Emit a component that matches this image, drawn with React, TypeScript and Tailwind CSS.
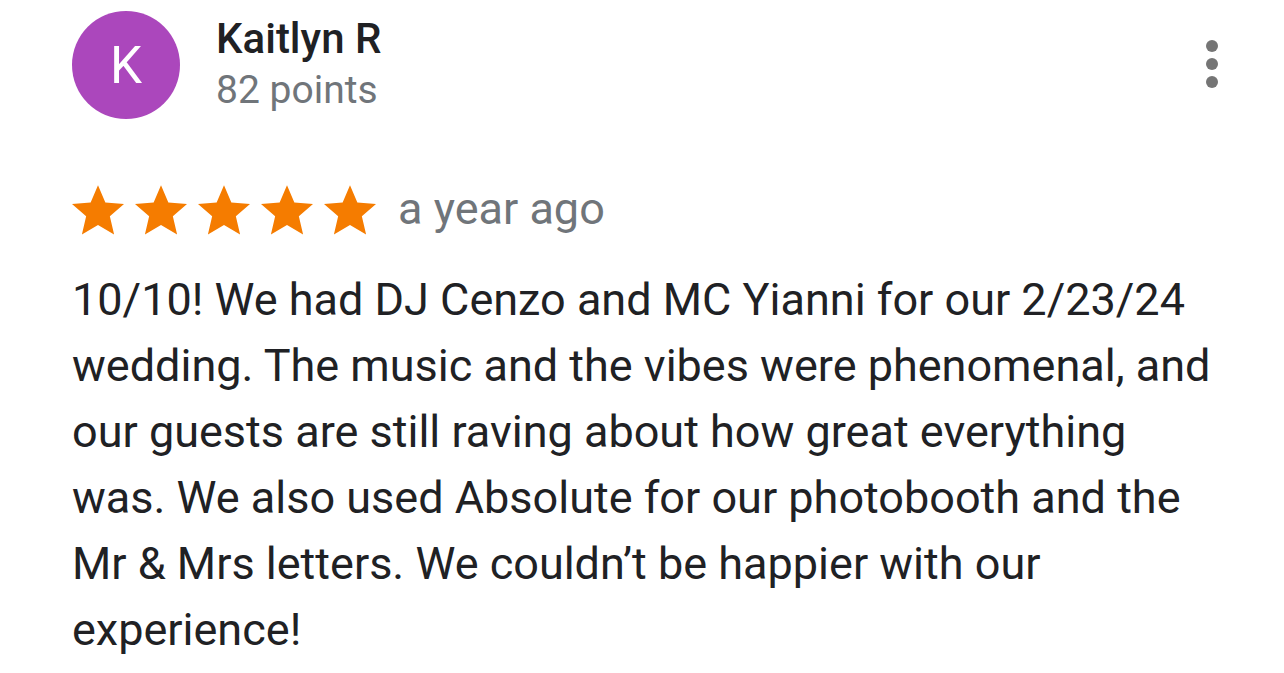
function Star() {
  return (
    <svg viewBox="0 0 24 24" className="w-[60px] h-[60px]" fill="#f57c00">
      <path d="M12 2.5l2.94 6.9 7.46.64-5.66 4.9 1.7 7.3L12 18.35 5.56 22.24l1.7-7.3L1.6 10.04l7.46-.64z" />
    </svg>
  );
}

export default function App() {
  return (
    <div
      className="w-[1284px] h-[673px] bg-white overflow-hidden pl-[72px] pr-[60px]"
      style={{ fontFamily: "Roboto, 'Noto Sans', sans-serif" }}
    >
      <div className="flex items-start pt-[11px]">
        <div className="w-[108px] h-[108px] rounded-full bg-[#ab47bc] flex items-center justify-center text-white text-[51px] leading-none shrink-0">
          K
        </div>
        <div className="ml-[36px] flex-1 pt-[2px]">
          <div className="text-[42px] font-medium text-[#202124] leading-[52px]">Kaitlyn R</div>
          <div className="text-[39px] text-[#70757a] leading-[51px]">82 points</div>
        </div>
        <div className="flex flex-col gap-[6px] pt-[29px] pr-[6px]">
          <div className="w-[12px] h-[12px] rounded-full bg-[#757575]" />
          <div className="w-[12px] h-[12px] rounded-full bg-[#757575]" />
          <div className="w-[12px] h-[12px] rounded-full bg-[#757575]" />
        </div>
      </div>
      <div className="flex items-center mt-[60px] h-[60px]">
        <div className="flex gap-[3px] -ml-[4px]">
          <Star />
          <Star />
          <Star />
          <Star />
          <Star />
        </div>
        <div className="ml-[18px] text-[45px] leading-[60px] text-[#70757a]">a year ago</div>
      </div>
      <p className="mt-[28px] text-[45px] leading-[66px] text-[#202124]">
        10/10! We had DJ Cenzo and MC Yianni for our 2/23/24 wedding. The music and the vibes were phenomenal, and our guests are still raving about how great everything was. We also used Absolute for our photobooth and the Mr &amp; Mrs letters. We couldn’t be happier with our experience!
      </p>
    </div>
  );
}
